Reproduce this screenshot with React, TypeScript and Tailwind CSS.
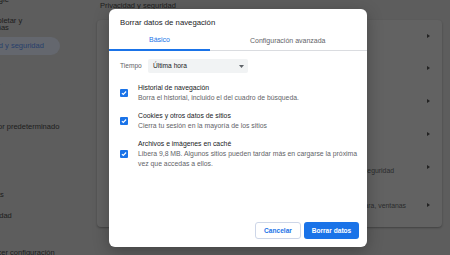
import React from "react";

const SIDEBAR: { label: string; h: string; active?: boolean; lines?: string[] }[] = [
  { label: "Tú y Google", h: "h-[20px]" },
  { label: "", lines: ["Autocompletar y", "contraseñas"], h: "h-[27px]" },
  { label: "Privacidad y seguridad", h: "h-[18px]", active: true },
  { label: "Aspecto", h: "h-[21px]" },
  { label: "Buscador", h: "h-[20px]" },
  { label: "Al iniciar", h: "h-[20px]" },
  { label: "Navegador predeterminado", h: "h-[21px]" },
  { label: "Idiomas", h: "h-[48px]" },
  { label: "Descargas", h: "h-[20px]" },
  { label: "Accesibilidad", h: "h-[21px]" },
  { label: "Sistema", h: "h-[17px]" },
  { label: "Restablecer configuración", h: "h-[20px]" },
];

// sub lines: the first one is pushed to end at `end` px from the text column's right edge
const ROWS: { title: string; sub: string[]; h: string; end: string }[] = [
  { title: "Borrar datos de navegación", sub: ["Borra el historial, las cookies, la caché y más"], h: "h-[31px]", end: "pr-[150px]" },
  { title: "Cookies y otros datos de sitios", sub: ["Cookies de terceros bloqueadas en incógnito"], h: "h-[33px]", end: "pr-[150px]" },
  { title: "Seguridad", sub: ["Navegación segura y otros ajustes"], h: "h-[33px]", end: "pr-[150px]" },
  { title: "Gestionar certificados", sub: ["Ajustes HTTPS/SSL"], h: "h-[33px]", end: "pr-[150px]" },
  {
    title: "Navegación segura",
    sub: ["Navegación segura (protección frente a sitios peligrosos) y otras opciones de seguridad"],
    h: "h-[33px]",
    end: "pr-[33px]",
  },
  {
    title: "Configuración de sitios",
    sub: ["Controla qué información pueden usar y mostrar los sitios (ubicación, cámara, ventanas", "emergentes y más)"],
    h: "h-[44px]",
    end: "pr-[21px]",
  },
];

const ITEMS = [
  { title: "Historial de navegación", sub: "Borra el historial, incluido el del cuadro de búsqueda." },
  { title: "Cookies y otros datos de sitios", sub: "Cierra tu sesión en la mayoría de los sitios" },
  {
    title: "Archivos e imágenes en caché",
    sub: "Libera 9,8 MB. Algunos sitios pueden tardar más en cargarse la próxima vez que accedas a ellos.",
  },
];

function Checkbox() {
  return (
    <svg width="8" height="8" viewBox="0 0 8 8" className="shrink-0">
      <rect x="0" y="0" width="8" height="8" rx="1" fill="#1a73e8" />
      <path d="M1.9 4.1 L3.3 5.5 L6.1 2.5" fill="none" stroke="white" strokeWidth="1.1" />
    </svg>
  );
}

export default function App() {
  return (
    <div className="relative w-[450px] h-[255px] overflow-hidden bg-[#5d5d5d] flex font-['Liberation_Sans',Arial,sans-serif]">
      {/* Settings page behind the overlay */}
      <div className="w-[97px] shrink-0 overflow-hidden">
        <div className="-ml-[32px] -mt-[10px] flex flex-col text-[7.5px] text-[#1c1c1c]">
          {SIDEBAR.map((s, i) =>
            s.active ? (
              <div
                key={i}
                className={`${s.h} w-[92px] rounded-r-full bg-[#64676e] text-[#28406b] flex items-center whitespace-nowrap`}
              >
                {s.label}
              </div>
            ) : (
              <div key={i} className={`${s.h} flex flex-col justify-center whitespace-nowrap leading-[7px]`}>
                {s.lines ? s.lines.map((l) => <span key={l}>{l}</span>) : <span className="leading-[10px]">{s.label}</span>}
              </div>
            )
          )}
        </div>
      </div>

      <div className="flex-1 flex flex-col pr-[8px]">
        <div className="pt-[1px] pl-[3px] text-[7.5px] leading-[10px] text-[#1c1c1c]">Privacidad y seguridad</div>
        <div className="mt-[9px] h-[207px] bg-[#626262] rounded-[4px] shadow-[0_1px_2px_rgba(0,0,0,0.3)] flex flex-col">
          {ROWS.map((r) => (
            <div key={r.title} className={`${r.h} flex items-center pl-[18px] pr-[12px]`}>
              <div className="flex-1 min-w-0">
                <div className="text-[7.5px] leading-[9px] text-[#1c1c1c] whitespace-nowrap">{r.title}</div>
                <div className={`flex justify-end whitespace-nowrap text-[6.85px] leading-[8px] text-[#2a2b2c] ${r.end}`}>
                  {r.sub[0]}
                </div>
                {r.sub[1] && <div className="text-[6.85px] leading-[8px] text-[#2a2b2c]">{r.sub[1]}</div>}
              </div>
              <svg width="3" height="4" viewBox="0 0 3 4" className="shrink-0">
                <polygon points="0,0 3,2 0,4" fill="#222" />
              </svg>
            </div>
          ))}
        </div>
      </div>

      {/* Dialog */}
      <div className="absolute left-[109px] top-[9px] w-[258px] h-[238px] bg-white rounded-[6px] shadow-[0_4px_16px_rgba(0,0,0,0.28)] flex flex-col">
        <h2 className="pl-[11px] pt-[9px] pb-[3px] text-[7.75px] leading-[10px] text-[#202124]">
          Borrar datos de navegación
        </h2>

        <div className="flex h-[20px] border-b border-[#dadce0]">
          <div className="px-[40px] pt-[1px] -mb-px flex items-center border-b-2 border-[#1a73e8] text-[7px] text-[#1a73e8]">
            Básico
          </div>
          <div className="px-[40px] pt-[1px] flex items-center text-[7px] text-[#5f6368]">
            Configuración avanzada
          </div>
        </div>

        <div className="mt-[8px] pl-[11px] h-[14px] flex items-center">
          <span className="w-[28px] text-[6.6px] text-[#5f6368]">Tiempo</span>
          <div className="w-[100px] h-[14px] bg-[#f1f3f4] rounded-[2px] flex items-center justify-between pl-[5px] pr-[4px]">
            <span className="text-[6.65px] text-[#202124]">Última hora</span>
            <svg width="5" height="3" viewBox="0 0 5 3">
              <polygon points="0,0 5,0 2.5,3" fill="#5f6368" />
            </svg>
          </div>
        </div>

        <div className="mt-[9px] pl-[11px] pr-[8px] flex flex-col gap-[7px]">
          {ITEMS.map((it) => (
            <div key={it.title} className="flex items-center">
              <Checkbox />
              <div className="ml-[10px] flex-1">
                <div className="text-[6.85px] leading-[11px] text-[#202124]">{it.title}</div>
                <div className="text-[6.85px] leading-[10px] text-[#5f6368]">{it.sub}</div>
              </div>
            </div>
          ))}
        </div>

        <div className="mt-auto pr-[8px] pb-[8px] flex justify-end gap-[3px]">
          <button className="w-[46px] h-[17px] rounded-[3px] border border-[#cdd6e8] bg-white text-[6.6px] font-bold text-[#1a73e8]">
            Cancelar
          </button>
          <button className="w-[55px] h-[17px] rounded-[3px] bg-[#1a73e8] text-[6.6px] font-bold text-white">
            Borrar datos
          </button>
        </div>
      </div>
    </div>
  );
}
